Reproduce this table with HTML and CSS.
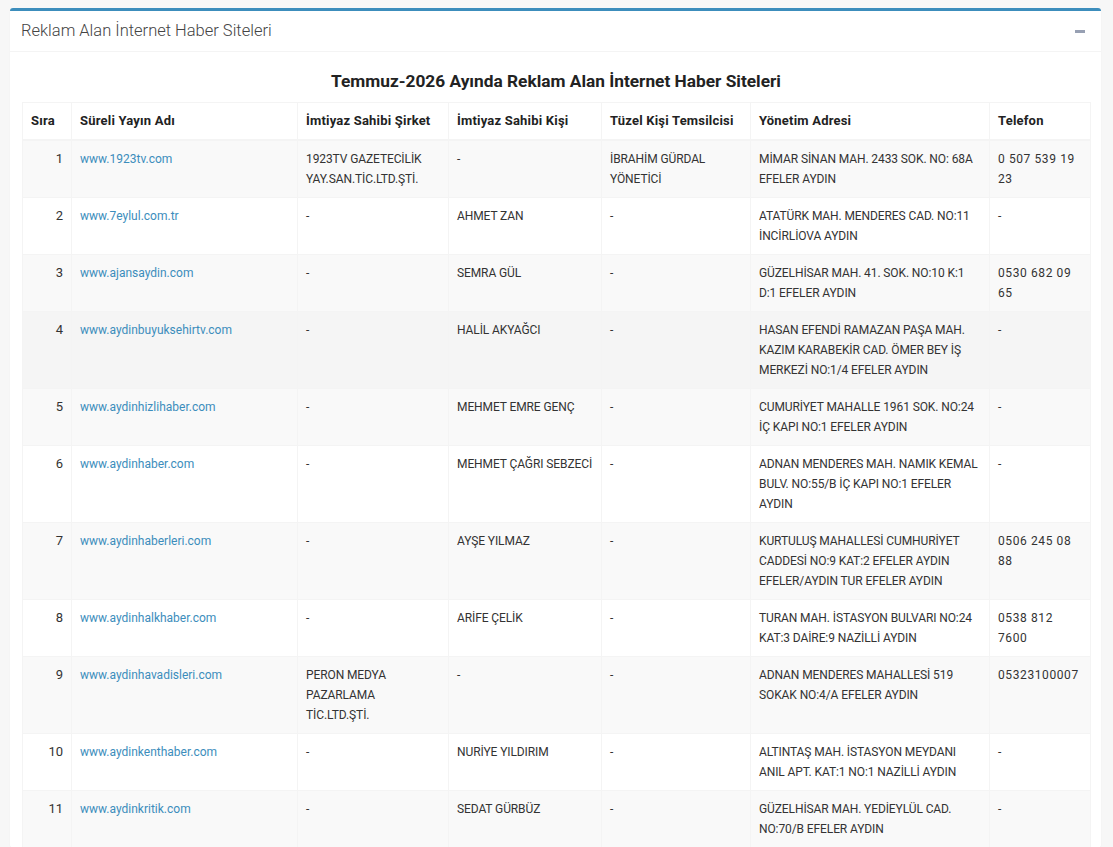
FILE: index.html
```html
<!DOCTYPE html>
<html lang="tr">
<head>
<meta charset="utf-8">
<title>Reklam Alan İnternet Haber Siteleri</title>
<link rel="stylesheet" href="styles.css">
</head>
<body>
<div class="box">
  <div class="box-header">
    <h3 class="box-title">Reklam Alan İnternet Haber Siteleri</h3>
    <button class="btn-tool" aria-label="Daralt"><span class="minus"></span></button>
  </div>
  <div class="box-body">
    <h4 class="table-title">Temmuz-2026 Ayında Reklam Alan İnternet Haber Siteleri</h4>
    <table class="data-table">
      <colgroup>
        <col class="c-sira"><col class="c-yayin"><col class="c-sirket"><col class="c-kisi"><col class="c-tuzel"><col class="c-adres"><col class="c-tel">
      </colgroup>
      <thead>
        <tr><th>Sıra</th><th>Süreli Yayın Adı</th><th>İmtiyaz Sahibi Şirket</th><th>İmtiyaz Sahibi Kişi</th><th>Tüzel Kişi Temsilcisi</th><th>Yönetim Adresi</th><th>Telefon</th></tr>
      </thead>
      <tbody>
        <tr><td class="num">1</td><td><a href="#">www.1923tv.com</a></td><td>1923TV GAZETECİLİK YAY.SAN.TİC.LTD.ŞTİ.</td><td>-</td><td>İBRAHİM GÜRDAL YÖNETİCİ</td><td>MİMAR SİNAN MAH. 2433 SOK. NO: 68A EFELER AYDIN</td><td class="tel">0 507 539 19 23</td></tr>
        <tr><td class="num">2</td><td><a href="#">www.7eylul.com.tr</a></td><td>-</td><td>AHMET ZAN</td><td>-</td><td>ATATÜRK MAH. MENDERES CAD. NO:11 İNCİRLİOVA AYDIN</td><td class="tel">-</td></tr>
        <tr><td class="num">3</td><td><a href="#">www.ajansaydin.com</a></td><td>-</td><td>SEMRA GÜL</td><td>-</td><td>GÜZELHİSAR MAH. 41. SOK. NO:10 K:1 D:1 EFELER AYDIN</td><td class="tel">0530 682 09 65</td></tr>
        <tr class="hover"><td class="num">4</td><td><a href="#">www.aydinbuyuksehirtv.com</a></td><td>-</td><td>HALİL AKYAĞCI</td><td>-</td><td>HASAN EFENDİ RAMAZAN PAŞA MAH. KAZIM KARABEKİR CAD. ÖMER BEY İŞ MERKEZİ NO:1/4 EFELER AYDIN</td><td class="tel">-</td></tr>
        <tr><td class="num">5</td><td><a href="#">www.aydinhizlihaber.com</a></td><td>-</td><td>MEHMET EMRE GENÇ</td><td>-</td><td>CUMURİYET MAHALLE 1961 SOK. NO:24 İÇ KAPI NO:1 EFELER AYDIN</td><td class="tel">-</td></tr>
        <tr><td class="num">6</td><td><a href="#">www.aydinhaber.com</a></td><td>-</td><td>MEHMET ÇAĞRI SEBZECİ</td><td>-</td><td>ADNAN MENDERES MAH. NAMIK KEMAL BULV. NO:55/B İÇ KAPI NO:1 EFELER AYDIN</td><td class="tel">-</td></tr>
        <tr><td class="num">7</td><td><a href="#">www.aydinhaberleri.com</a></td><td>-</td><td>AYŞE YILMAZ</td><td>-</td><td>KURTULUŞ MAHALLESİ CUMHURİYET CADDESİ NO:9 KAT:2 EFELER AYDIN EFELER/AYDIN TUR EFELER AYDIN</td><td class="tel">0506 245 08 88</td></tr>
        <tr><td class="num">8</td><td><a href="#">www.aydinhalkhaber.com</a></td><td>-</td><td>ARİFE ÇELİK</td><td>-</td><td>TURAN MAH. İSTASYON BULVARI NO:24 KAT:3 DAİRE:9 NAZİLLİ AYDIN</td><td class="tel">0538 812 7600</td></tr>
        <tr><td class="num">9</td><td><a href="#">www.aydinhavadisleri.com</a></td><td>PERON MEDYA PAZARLAMA TİC.LTD.ŞTİ.</td><td>-</td><td>-</td><td>ADNAN MENDERES MAHALLESİ 519 SOKAK NO:4/A EFELER AYDIN</td><td class="tel">05323100007</td></tr>
        <tr><td class="num">10</td><td><a href="#">www.aydinkenthaber.com</a></td><td>-</td><td>NURİYE YILDIRIM</td><td>-</td><td>ALTINTAŞ MAH. İSTASYON MEYDANI ANIL APT. KAT:1 NO:1 NAZİLLİ AYDIN</td><td class="tel">-</td></tr>
        <tr><td class="num">11</td><td><a href="#">www.aydinkritik.com</a></td><td>-</td><td>SEDAT GÜRBÜZ</td><td>-</td><td>GÜZELHİSAR MAH. YEDİEYLÜL CAD. NO:70/B EFELER AYDIN</td><td class="tel">-</td></tr>
      </tbody>
    </table>
  </div>
</div>
</body>
</html>
```
FILE: styles.css
```css
* { box-sizing: border-box; }
html, body { margin: 0; padding: 0; }
body {
  background: #f7f7f7;
  font-family: Roboto, "Liberation Sans", Arial, sans-serif;
  font-size: 12px;
  color: #333;
  overflow: hidden;
}
.box {
  margin: 8px 0 0 10px;
  width: 1091px;
  background: #fff;
  border-top: 3px solid #3c8dbc;
  border-radius: 3px;
  box-shadow: 0 1px 1px rgba(0,0,0,0.08);
}
.box-header {
  height: 41px;
  display: flex;
  align-items: center;
  justify-content: space-between;
  padding: 0 16px 0 11px;
  border-bottom: 1px solid #f4f4f4;
}
.box-title {
  margin: 0;
  font-size: 16.5px;
  font-weight: 300;
  color: #444;
  line-height: 1;
}
.btn-tool {
  border: 0;
  background: none;
  padding: 0;
  width: 10px;
  height: 10px;
  display: flex;
  align-items: center;
}
.minus {
  display: block;
  width: 10px;
  height: 3px;
  background: #97a0b3;
}
.box-body {
  padding: 0 11px 0 12px;
}
.table-title {
  margin: 17px 0 9px;
  text-align: center;
  font-size: 17.3px;
  font-weight: 700;
  line-height: 24px;
  color: #222;
}
.data-table {
  width: 1068px;
  table-layout: fixed;
  border-collapse: collapse;
}
.c-sira { width: 49px; }
.c-yayin { width: 226px; }
.c-sirket { width: 151px; }
.c-kisi { width: 153px; }
.c-tuzel { width: 149px; }
.c-adres { width: 239px; }
.c-tel { width: 101px; }
.data-table th, .data-table td {
  border: 1px solid #f4f4f4;
  padding: 8px;
  line-height: 20px;
  vertical-align: top;
  text-align: left;
}
.data-table thead th {
  font-weight: 700;
  font-size: 13px;
  letter-spacing: 0.2px;
  color: #222;
  border-bottom-width: 2px;
}
.data-table td { color: #333; letter-spacing: -0.1px; }
.data-table td.tel { letter-spacing: 0.6px; }
.data-table tbody tr:nth-child(odd) { background: #f9f9f9; }
.data-table tbody tr.hover { background: #f5f5f5; }
.data-table td.num { text-align: right; font-size: 13px; letter-spacing: 0; }
.data-table a { color: #3c8dbc; text-decoration: none; letter-spacing: 0; }
```
